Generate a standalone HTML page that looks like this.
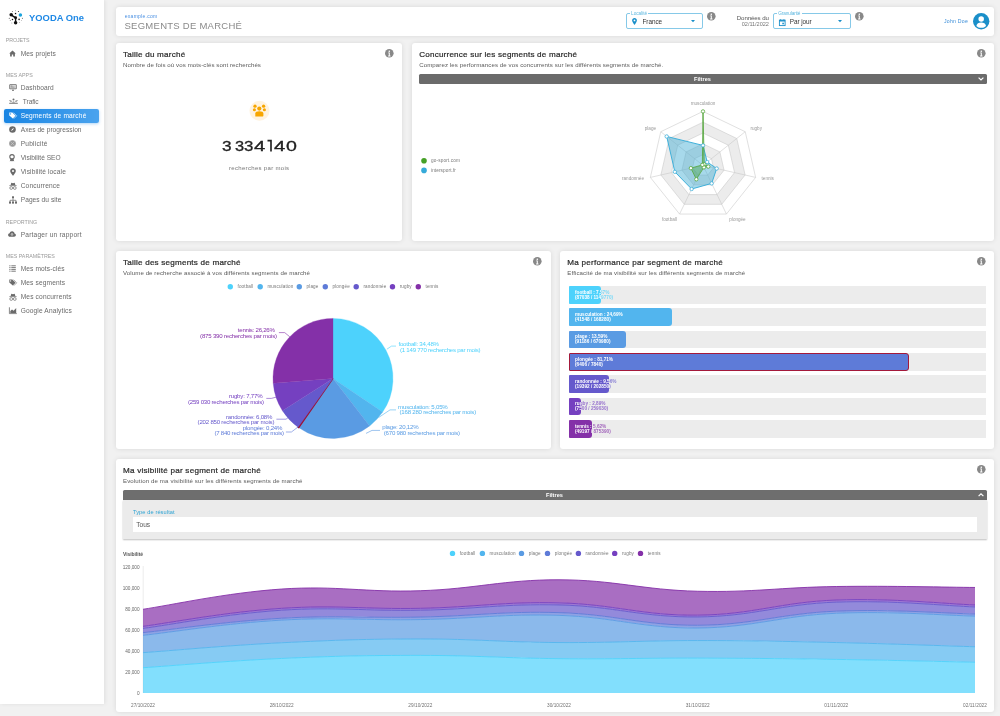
<!DOCTYPE html>
<html><head><meta charset="utf-8"><style>
*{margin:0;padding:0;box-sizing:border-box}
html,body{width:1000px;height:716px;overflow:hidden;background:#f1f1f1;font-family:"Liberation Sans", sans-serif}
.t{position:absolute;white-space:nowrap;line-height:1}
.card{position:absolute;background:#fff;box-shadow:0 0 5px rgba(0,0,0,0.10)}
.side{position:absolute;left:0;top:0;width:104px;height:703.6px;background:#fff;box-shadow:1px 0 4px rgba(0,0,0,0.08)}
svg{position:absolute;overflow:visible}
.abs{position:absolute}
</style></head><body>
<div id="wrap" style="position:absolute;left:0;top:0;width:1000px;height:716px;will-change:transform">
<div class="side"></div>
<div class="card" style="left:116px;top:7px;width:878px;height:29px;border-radius:3px"></div>
<div class="card" style="left:116px;top:43px;width:286px;height:197.5px;border-radius:3px"></div>
<div class="card" style="left:412px;top:43px;width:582px;height:197.5px;border-radius:3px"></div>
<div class="card" style="left:116px;top:250.6px;width:434.6px;height:198.4px;border-radius:3px"></div>
<div class="card" style="left:560px;top:250.6px;width:434px;height:198.4px;border-radius:3px"></div>
<div class="card" style="left:116px;top:458.5px;width:878px;height:253.0px;border-radius:3px"></div>
<svg style="left:0;top:0" width="40" height="40" viewBox="0 0 40 40"><g fill="#111">
<circle cx="11.2" cy="14.8" r="1.75"/><circle cx="15.6" cy="17.8" r="1.45"/><circle cx="15.6" cy="22.7" r="1.75"/>
<path d="M11.2 14.8 L15.6 17.8 L15.6 22.7" stroke="#111" stroke-width="1.4" fill="none"/>
<rect x="14.9" y="12.9" width="1.3" height="1.3"/><circle cx="18.4" cy="11.5" r="0.5"/><circle cx="15.5" cy="10.7" r="0.45" fill="#777"/>
<circle cx="12.4" cy="11.4" r="0.5" fill="#666"/><circle cx="9.3" cy="18.3" r="0.55" fill="#555"/><circle cx="12.5" cy="19.4" r="0.75"/>
<circle cx="10.3" cy="20.6" r="0.5" fill="#777"/><circle cx="19.1" cy="19.4" r="0.8"/><circle cx="22.4" cy="18.3" r="0.55" fill="#555"/>
<circle cx="21.4" cy="20.6" r="0.45" fill="#777"/><circle cx="19.7" cy="22.5" r="0.45" fill="#777"/><circle cx="11.8" cy="22.9" r="0.5" fill="#999"/>
</g><circle cx="20.4" cy="15" r="1.75" fill="#1aa3dc"/></svg>
<div class="abs" style="left:4.1px;top:108.6px;width:94.9px;height:14.1px;border-radius:2px;background:linear-gradient(90deg,#1985e3,#4aa3ee);box-shadow:0 1px 3px rgba(30,136,229,0.35)"></div>
<svg style="left:8.8px;top:49.7px" width="7" height="7" viewBox="0 0 7 7"><path d="M3.5 0.4 L0.2 3.4 L1.1 3.4 L1.1 6.6 L2.8 6.6 L2.8 4.6 L4.2 4.6 L4.2 6.6 L5.9 6.6 L5.9 3.4 L6.8 3.4 Z" fill="#6a6a6a"/></svg>
<svg style="left:8.5px;top:84.2px" width="8" height="7" viewBox="0 0 8 7"><rect x="0.3" y="0.3" width="7.4" height="5" rx="0.8" fill="#6a6a6a"/><rect x="1.1" y="1.0" width="5.8" height="3.5" fill="#d8d8d8"/><path d="M1.8 2h1.6M1.8 3.1h3.8" stroke="#6a6a6a" stroke-width="0.6"/><path d="M3.2 6.5h1.6" stroke="#6a6a6a" stroke-width="0.9"/><path d="M4 5.3v1" stroke="#6a6a6a" stroke-width="0.8"/></svg>
<svg style="left:9.3px;top:98.2px" width="9" height="6" viewBox="0 0 9 6"><path d="M0.2 2.6h2.2M6.6 2.6h2.2" stroke="#6a6a6a" stroke-width="0.6"/><path d="M0.2 5.3h8.6" stroke="#6a6a6a" stroke-width="0.9"/><circle cx="4.5" cy="1.4" r="1.0" fill="#6a6a6a"/><path d="M3 4.6 Q4.5 2.2 6 4.6Z" fill="#6a6a6a"/><circle cx="2.0" cy="3.6" r="0.7" fill="#6a6a6a"/><circle cx="7.0" cy="3.6" r="0.7" fill="#6a6a6a"/></svg>
<svg style="left:8.700000000000001px;top:112.19999999999999px" width="8" height="7" viewBox="0 0 8 7"><path d="M0.3 0.6 L3.3 0.6 L6.6 3.8 L3.8 6.6 L0.3 3.4 Z" fill="#fff"/><circle cx="1.6" cy="1.9" r="0.6" fill="#2d8fe6"/><path d="M4.6 0.8 L7.7 3.8 L4.8 6.7" stroke="#fff" stroke-width="0.6" fill="none"/></svg>
<svg style="left:8.8px;top:125.9px" width="7" height="7" viewBox="0 0 7 7"><circle cx="3.5" cy="3.5" r="3.3" fill="#6a6a6a"/><path d="M5 2 L3.9 3.9 L2 5 L3.1 3.1Z" fill="#fff"/></svg>
<svg style="left:8.8px;top:139.9px" width="7" height="7" viewBox="0 0 7 7"><circle cx="3.5" cy="3.5" r="3.3" fill="#9a9a9a"/><path d="M1.2 1.3 L5.7 5.7 M1.3 5.7 L5.7 1.3" stroke="#d0d0d0" stroke-width="0.6"/></svg>
<svg style="left:9.3px;top:153.6px" width="6" height="8" viewBox="0 0 6 8"><circle cx="3" cy="2.8" r="2.2" fill="none" stroke="#6a6a6a" stroke-width="1.1"/><path d="M1.5 4.6 L0.8 7.4 L2 6.8 L3 7.6 L4 6.8 L5.2 7.4 L4.5 4.6Z" fill="#6a6a6a"/></svg>
<svg style="left:9.5px;top:167.6px" width="6" height="8" viewBox="0 0 6 8"><path d="M3 0.2 C1.3 0.2 0.2 1.4 0.2 3 C0.2 4.6 3 7.8 3 7.8 C3 7.8 5.8 4.6 5.8 3 C5.8 1.4 4.7 0.2 3 0.2Z" fill="#6a6a6a"/><circle cx="3" cy="2.9" r="1" fill="#fff"/></svg>
<svg style="left:8.700000000000001px;top:181.6px" width="8" height="8" viewBox="0 0 8 8"><path d="M1.6 3.2 L2.3 0.8 L4 1.3 L5.7 0.8 L6.4 3.2Z" fill="#6a6a6a"/><path d="M0.4 3.6h7.2" stroke="#6a6a6a" stroke-width="0.7"/><circle cx="2.2" cy="6" r="1.4" fill="none" stroke="#6a6a6a" stroke-width="0.7"/><circle cx="5.8" cy="6" r="1.4" fill="none" stroke="#6a6a6a" stroke-width="0.7"/></svg>
<svg style="left:8.5px;top:195.6px" width="8" height="8" viewBox="0 0 8 8"><rect x="3" y="0.3" width="2" height="2" fill="#6a6a6a"/><path d="M4 2.3v2M1 6V4.3h6V6M4 4.3V6" stroke="#6a6a6a" stroke-width="0.7" fill="none"/><rect x="0" y="5.6" width="2" height="2" fill="#6a6a6a"/><rect x="3" y="5.6" width="2" height="2" fill="#6a6a6a"/><rect x="6" y="5.6" width="2" height="2" fill="#6a6a6a"/></svg>
<svg style="left:8.4px;top:231.1px" width="8" height="6" viewBox="0 0 8 6"><path d="M2 5.8 C0.9 5.8 0.1 5 0.1 4 C0.1 3.1 0.8 2.4 1.6 2.3 C1.9 1 2.9 0.2 4.1 0.2 C5.4 0.2 6.4 1.2 6.5 2.4 C7.3 2.6 7.9 3.3 7.9 4.1 C7.9 5.1 7.1 5.8 6.1 5.8Z" fill="#6a6a6a"/><path d="M4 4.9V2.6M3 3.5 L4 2.5 L5 3.5" stroke="#fff" stroke-width="0.7" fill="none"/></svg>
<svg style="left:9.0px;top:265.1px" width="7" height="7" viewBox="0 0 7 7"><path d="M0.3 0.8h1.2M0.3 2.6h1.2M0.3 4.4h1.2M0.3 6.2h1.2M2.3 0.8h4.5M2.3 2.6h4.5M2.3 4.4h4.5M2.3 6.2h4.5" stroke="#6a6a6a" stroke-width="0.9"/></svg>
<svg style="left:8.700000000000001px;top:279.1px" width="8" height="7" viewBox="0 0 8 7"><path d="M0.3 0.6 L3.3 0.6 L6.6 3.8 L3.8 6.6 L0.3 3.4 Z" fill="#6a6a6a"/><circle cx="1.6" cy="1.9" r="0.6" fill="#fff"/><path d="M4.6 0.8 L7.7 3.8 L4.8 6.7" stroke="#6a6a6a" stroke-width="0.6" fill="none"/></svg>
<svg style="left:8.700000000000001px;top:292.5px" width="8" height="8" viewBox="0 0 8 8"><path d="M1.6 3.2 L2.3 0.8 L4 1.3 L5.7 0.8 L6.4 3.2Z" fill="#6a6a6a"/><path d="M0.4 3.6h7.2" stroke="#6a6a6a" stroke-width="0.7"/><circle cx="2.2" cy="6" r="1.4" fill="none" stroke="#6a6a6a" stroke-width="0.7"/><circle cx="5.8" cy="6" r="1.4" fill="none" stroke="#6a6a6a" stroke-width="0.7"/></svg>
<svg style="left:8.700000000000001px;top:306.8px" width="8" height="7" viewBox="0 0 8 7"><path d="M0.4 0.3V6.6H7.8" stroke="#6a6a6a" stroke-width="0.8" fill="none"/><path d="M1.3 6 L1.3 4 L3 2.4 L4.6 3.8 L7.2 1 L7.2 6Z" fill="#6a6a6a"/></svg>
<div class="abs" style="left:626.1px;top:13.1px;width:77.3px;height:16.4px;border:1px solid #86c9e8;border-radius:2px"></div>
<div class="abs" style="left:630.1px;top:11.5px;width:18.4px;height:4px;background:#fff"></div>
<svg style="left:691.0px;top:20.3px" width="4" height="2.5" viewBox="0 0 4 2.5"><path d="M0 0 L4 0 L2 2.2Z" fill="#1a8fc9"/></svg>
<svg style="left:631.7px;top:18.0px" width="5" height="7" viewBox="0 0 5 7"><path d="M2.5 0.1 C1.1 0.1 0.1 1.1 0.1 2.4 C0.1 3.8 2.5 6.9 2.5 6.9 C2.5 6.9 4.9 3.8 4.9 2.4 C4.9 1.1 3.9 0.1 2.5 0.1Z" fill="#1a8fc9"/><circle cx="2.5" cy="2.4" r="0.9" fill="#fff"/></svg>
<div class="abs" style="left:773.3000000000001px;top:13.1px;width:77.3px;height:16.4px;border:1px solid #86c9e8;border-radius:2px"></div>
<div class="abs" style="left:777.3000000000001px;top:11.5px;width:24.4px;height:4px;background:#fff"></div>
<svg style="left:838.2px;top:20.3px" width="4" height="2.5" viewBox="0 0 4 2.5"><path d="M0 0 L4 0 L2 2.2Z" fill="#1a8fc9"/></svg>
<svg style="left:778.5px;top:18.7px" width="6.5" height="7" viewBox="0 0 6.5 7"><rect x="0.4" y="1.1" width="5.7" height="5.5" fill="none" stroke="#1a8fc9" stroke-width="0.9"/><rect x="0.4" y="1.1" width="5.7" height="1.4" fill="#1a8fc9"/><path d="M1.6 0.2v1.2M4.9 0.2v1.2" stroke="#1a8fc9" stroke-width="0.8"/><rect x="3.3" y="3.7" width="1.6" height="1.6" fill="#1a8fc9"/></svg>
<svg style="left:706.7px;top:11.899999999999999px" width="8.6" height="8.6" viewBox="0 0 10 10"><circle cx="5" cy="5" r="5" fill="#888"/><circle cx="5" cy="2.6" r="0.95" fill="#fff"/><path d="M3.7 4.1h1.9v3.6h0.8v0.9H3.6v-0.9h0.8V5H3.7Z" fill="#fff"/></svg>
<svg style="left:854.7px;top:11.899999999999999px" width="8.6" height="8.6" viewBox="0 0 10 10"><circle cx="5" cy="5" r="5" fill="#888"/><circle cx="5" cy="2.6" r="0.95" fill="#fff"/><path d="M3.7 4.1h1.9v3.6h0.8v0.9H3.6v-0.9h0.8V5H3.7Z" fill="#fff"/></svg>
<svg style="left:972.6px;top:13px" width="16.4" height="16.4" viewBox="0 0 16 16"><circle cx="8" cy="8" r="8" fill="#1a8fc9"/><circle cx="8" cy="5.8" r="2.7" fill="#fff"/><path d="M3.3 12.6 C3.6 10.2 5.5 9.2 8 9.2 C10.5 9.2 12.4 10.2 12.7 12.6 C11.5 13.8 9.9 14.4 8 14.4 C6.1 14.4 4.5 13.8 3.3 12.6Z" fill="#fff"/></svg>
<svg style="left:385.2px;top:48.900000000000006px" width="8.6" height="8.6" viewBox="0 0 10 10"><circle cx="5" cy="5" r="5" fill="#888"/><circle cx="5" cy="2.6" r="0.95" fill="#fff"/><path d="M3.7 4.1h1.9v3.6h0.8v0.9H3.6v-0.9h0.8V5H3.7Z" fill="#fff"/></svg>
<svg style="left:977.3000000000001px;top:48.900000000000006px" width="8.6" height="8.6" viewBox="0 0 10 10"><circle cx="5" cy="5" r="5" fill="#888"/><circle cx="5" cy="2.6" r="0.95" fill="#fff"/><path d="M3.7 4.1h1.9v3.6h0.8v0.9H3.6v-0.9h0.8V5H3.7Z" fill="#fff"/></svg>
<svg style="left:533.2px;top:256.9px" width="8.6" height="8.6" viewBox="0 0 10 10"><circle cx="5" cy="5" r="5" fill="#888"/><circle cx="5" cy="2.6" r="0.95" fill="#fff"/><path d="M3.7 4.1h1.9v3.6h0.8v0.9H3.6v-0.9h0.8V5H3.7Z" fill="#fff"/></svg>
<svg style="left:977.3000000000001px;top:256.9px" width="8.6" height="8.6" viewBox="0 0 10 10"><circle cx="5" cy="5" r="5" fill="#888"/><circle cx="5" cy="2.6" r="0.95" fill="#fff"/><path d="M3.7 4.1h1.9v3.6h0.8v0.9H3.6v-0.9h0.8V5H3.7Z" fill="#fff"/></svg>
<svg style="left:977.3000000000001px;top:464.7px" width="8.6" height="8.6" viewBox="0 0 10 10"><circle cx="5" cy="5" r="5" fill="#888"/><circle cx="5" cy="2.6" r="0.95" fill="#fff"/><path d="M3.7 4.1h1.9v3.6h0.8v0.9H3.6v-0.9h0.8V5H3.7Z" fill="#fff"/></svg>
<svg style="left:0;top:0" width="1000" height="716"><circle cx="259.5" cy="110.7" r="10" fill="#fff3df"/>
<g fill="#f7a600">
<circle cx="255.0" cy="106.2" r="1.65"/><circle cx="263.6" cy="106.2" r="1.65"/>
<circle cx="254.4" cy="109.8" r="1.55"/><circle cx="264.4" cy="109.8" r="1.55"/>
<circle cx="259.3" cy="108.6" r="2.1"/>
<path d="M255.3 116.6 L255.3 113.6 C255.3 111.9 256.8 111.2 259.3 111.2 C261.8 111.2 263.4 111.9 263.4 113.6 L263.4 115.6 C263.4 116.3 263 116.6 262.4 116.6 Z"/>
</g></svg>
<svg style="left:0;top:0" width="1000" height="716"><path d="M267.5 140.6 H271.0 V151.4" stroke="#222" stroke-width="1.65" fill="none" stroke-linejoin="miter"/></svg>
<div class="t" style="left:222.20px;top:139.20px;font-size:14.5px;color:#222;-webkit-text-stroke:0.3px #222;transform:scaleX(1.186);transform-origin:0 0">3</div>
<div class="t" style="left:234.60px;top:139.20px;font-size:14.5px;color:#222;-webkit-text-stroke:0.3px #222;transform:scaleX(1.131);transform-origin:0 0">3</div>
<div class="t" style="left:244.40px;top:139.20px;font-size:14.5px;color:#222;-webkit-text-stroke:0.3px #222;transform:scaleX(1.159);transform-origin:0 0">3</div>
<div class="t" style="left:254.40px;top:139.20px;font-size:14.5px;color:#222;-webkit-text-stroke:0.3px #222;transform:scaleX(1.407);transform-origin:0 0">4</div>
<div class="t" style="left:274.40px;top:139.20px;font-size:14.5px;color:#222;-webkit-text-stroke:0.3px #222;transform:scaleX(1.407);transform-origin:0 0">4</div>
<div class="t" style="left:286.00px;top:139.20px;font-size:14.5px;color:#222;-webkit-text-stroke:0.3px #222;transform:scaleX(1.352);transform-origin:0 0">0</div>
<div class="abs" style="left:419.2px;top:74px;width:568.3px;height:9.6px;background:#6b6b6b;border-radius:1.5px"></div>
<svg style="left:977.5px;top:77.3px" width="6" height="4" viewBox="0 0 6 4"><path d="M0.6 0.6 L3 3 L5.4 0.6" stroke="#fff" stroke-width="1.2" fill="none"/></svg>
<svg style="left:0;top:0" width="1000" height="716"><polygon points="703.00,111.40 745.22,131.73 755.65,177.42 726.43,214.05 679.57,214.05 650.35,177.42 660.78,131.73" fill="#ffffff" stroke="#c6c6c6" stroke-width="0.55"/><polygon points="703.00,122.20 736.78,138.47 745.12,175.01 721.74,204.32 684.26,204.32 660.88,175.01 669.22,138.47" fill="#ececec" stroke="#c6c6c6" stroke-width="0.55"/><polygon points="703.00,133.00 728.33,145.20 734.59,172.61 717.06,194.59 688.94,194.59 671.41,172.61 677.67,145.20" fill="#ffffff" stroke="#c6c6c6" stroke-width="0.55"/><polygon points="703.00,143.80 719.89,151.93 724.06,170.21 712.37,184.86 693.63,184.86 681.94,170.21 686.11,151.93" fill="#ececec" stroke="#c6c6c6" stroke-width="0.55"/><polygon points="703.00,154.60 711.44,158.67 713.53,167.80 707.69,175.13 698.31,175.13 692.47,167.80 694.56,158.67" fill="#ffffff" stroke="#c6c6c6" stroke-width="0.55"/><line x1="703.0" y1="165.4" x2="703.00" y2="111.40" stroke="#c6c6c6" stroke-width="0.55"/><line x1="703.0" y1="165.4" x2="745.22" y2="131.73" stroke="#c6c6c6" stroke-width="0.55"/><line x1="703.0" y1="165.4" x2="755.65" y2="177.42" stroke="#c6c6c6" stroke-width="0.55"/><line x1="703.0" y1="165.4" x2="726.43" y2="214.05" stroke="#c6c6c6" stroke-width="0.55"/><line x1="703.0" y1="165.4" x2="679.57" y2="214.05" stroke="#c6c6c6" stroke-width="0.55"/><line x1="703.0" y1="165.4" x2="650.35" y2="177.42" stroke="#c6c6c6" stroke-width="0.55"/><line x1="703.0" y1="165.4" x2="660.78" y2="131.73" stroke="#c6c6c6" stroke-width="0.55"/><polygon points="703.00,145.42 707.22,162.03 716.69,168.52 711.67,183.40 691.64,189.00 674.83,171.83 666.69,136.45" fill="rgba(60,170,210,0.45)" stroke="#3fb0da" stroke-width="1"/><polygon points="703.00,111.40 704.27,164.39 708.26,166.60 703.94,167.35 696.32,179.27 690.89,168.16 702.37,164.89" fill="rgba(70,160,70,0.45)" stroke="#56a83c" stroke-width="0.8"/><circle cx="703.00" cy="145.42" r="1.7" fill="#fff" stroke="#3fb0da" stroke-width="0.8"/><circle cx="707.22" cy="162.03" r="1.7" fill="#fff" stroke="#3fb0da" stroke-width="0.8"/><circle cx="716.69" cy="168.52" r="1.7" fill="#fff" stroke="#3fb0da" stroke-width="0.8"/><circle cx="711.67" cy="183.40" r="1.7" fill="#fff" stroke="#3fb0da" stroke-width="0.8"/><circle cx="691.64" cy="189.00" r="1.7" fill="#fff" stroke="#3fb0da" stroke-width="0.8"/><circle cx="674.83" cy="171.83" r="1.7" fill="#fff" stroke="#3fb0da" stroke-width="0.8"/><circle cx="666.69" cy="136.45" r="1.7" fill="#fff" stroke="#3fb0da" stroke-width="0.8"/><circle cx="703.00" cy="111.40" r="1.7" fill="#fff" stroke="#56a83c" stroke-width="0.8"/><circle cx="704.27" cy="164.39" r="1.7" fill="#fff" stroke="#56a83c" stroke-width="0.8"/><circle cx="708.26" cy="166.60" r="1.7" fill="#fff" stroke="#56a83c" stroke-width="0.8"/><circle cx="703.94" cy="167.35" r="1.7" fill="#fff" stroke="#56a83c" stroke-width="0.8"/><circle cx="696.32" cy="179.27" r="1.7" fill="#fff" stroke="#56a83c" stroke-width="0.8"/><circle cx="690.89" cy="168.16" r="1.7" fill="#fff" stroke="#56a83c" stroke-width="0.8"/><circle cx="702.37" cy="164.89" r="1.7" fill="#fff" stroke="#56a83c" stroke-width="0.8"/></svg>
<svg style="left:0;top:0" width="1000" height="716"><circle cx="424" cy="160.8" r="2.8" fill="#45a026"/><circle cx="424" cy="170.4" r="2.8" fill="#35aad9"/></svg>
<svg style="left:0;top:0" width="1000" height="716"><circle cx="230.30" cy="286.7" r="2.7" fill="#4dd2fc"/><circle cx="260.20" cy="286.7" r="2.7" fill="#52b5ee"/><circle cx="299.30" cy="286.7" r="2.7" fill="#5a9be3"/><circle cx="325.30" cy="286.7" r="2.7" fill="#5e7bd8"/><circle cx="356.20" cy="286.7" r="2.7" fill="#6559cc"/><circle cx="392.50" cy="286.7" r="2.7" fill="#7540c0"/><circle cx="418.30" cy="286.7" r="2.7" fill="#8430a8"/></svg>
<svg style="left:0;top:0" width="1000" height="716"><path d="M333.0,378.4 L333.00,318.40 A60.0,60.0 0 0 1 382.67,412.06 Z" fill="#4dd2fc" stroke="#4dd2fc" stroke-width="0.3"/><path d="M333.0,378.4 L382.67,412.06 A60.0,60.0 0 0 1 369.68,425.88 Z" fill="#52b5ee" stroke="#52b5ee" stroke-width="0.3"/><path d="M333.0,378.4 L369.68,425.88 A60.0,60.0 0 0 1 298.81,427.70 Z" fill="#5a9be3" stroke="#5a9be3" stroke-width="0.3"/><path d="M333.0,378.4 L298.81,427.70 A60.0,60.0 0 0 1 298.07,427.18 Z" fill="#5e7bd8" stroke="#9e1030" stroke-width="1.3"/><path d="M333.0,378.4 L298.07,427.18 A60.0,60.0 0 0 1 282.40,410.65 Z" fill="#6559cc" stroke="#6559cc" stroke-width="0.3"/><path d="M333.0,378.4 L282.40,410.65 A60.0,60.0 0 0 1 273.19,383.15 Z" fill="#7540c0" stroke="#7540c0" stroke-width="0.3"/><path d="M333.0,378.4 L273.19,383.15 A60.0,60.0 0 0 1 333.00,318.40 Z" fill="#8430a8" stroke="#8430a8" stroke-width="0.3"/></svg>
<svg style="left:0;top:0" width="1000" height="716"><g fill="none" stroke-width="0.6">
<path d="M278.9 332.6 H284.7 L289.8 336.8" stroke="#8430a8"/>
<path d="M266.3 398.4 H271.3 L276.4 397.1" stroke="#7540c0"/>
<path d="M276.4 419.2 H286 L289 417" stroke="#6559cc"/>
<path d="M285.9 432 H291.4 L298 427" stroke="#5e7bd8"/>
<path d="M386.9 349.2 L391.5 346.1 H396" stroke="#4dd2fc"/>
<path d="M378.5 417.6 L390 409.9 H396" stroke="#52b5ee"/>
<path d="M366 433.4 L372 430.4 H380" stroke="#5a9be3"/>
</g></svg>
<div class="abs" style="left:569.0px;top:286.00px;width:416.5px;height:17.6px;background:#ececec"></div>
<div style="position:absolute;left:0;top:0;opacity:0.72"><div class="t" style="left:575.00px;top:290.52px;font-size:4.7px;font-weight:700;color:#4dd2fc">football : 7,57%</div><div class="t" style="left:575.00px;top:295.62px;font-size:4.7px;font-weight:700;color:#4dd2fc">(87038 / 1149770)</div></div>
<div class="abs" style="left:569.0px;top:286.00px;width:31.53px;height:17.6px;background:#4dd2fc;border-radius:1px 3px 3px 1px;overflow:hidden;"><div class="t" style="left:6.00px;top:4.52px;font-size:4.7px;font-weight:700;color:#fff">football : 7,57%</div><div class="t" style="left:6.00px;top:9.62px;font-size:4.7px;font-weight:700;color:#fff">(87038 / 1149770)</div></div>
<div class="abs" style="left:569.0px;top:308.36px;width:416.5px;height:17.6px;background:#ececec"></div>
<div style="position:absolute;left:0;top:0;opacity:0.72"><div class="t" style="left:575.00px;top:312.88px;font-size:4.7px;font-weight:700;color:#52b5ee">musculation : 24,69%</div><div class="t" style="left:575.00px;top:317.98px;font-size:4.7px;font-weight:700;color:#52b5ee">(41548 / 168280)</div></div>
<div class="abs" style="left:569.0px;top:308.36px;width:102.83px;height:17.6px;background:#52b5ee;border-radius:1px 3px 3px 1px;overflow:hidden;"><div class="t" style="left:6.00px;top:4.52px;font-size:4.7px;font-weight:700;color:#fff">musculation : 24,69%</div><div class="t" style="left:6.00px;top:9.62px;font-size:4.7px;font-weight:700;color:#fff">(41548 / 168280)</div></div>
<div class="abs" style="left:569.0px;top:330.72px;width:416.5px;height:17.6px;background:#ececec"></div>
<div style="position:absolute;left:0;top:0;opacity:0.72"><div class="t" style="left:575.00px;top:335.24px;font-size:4.7px;font-weight:700;color:#5a9be3">plage : 13,59%</div><div class="t" style="left:575.00px;top:340.34px;font-size:4.7px;font-weight:700;color:#5a9be3">(91186 / 670980)</div></div>
<div class="abs" style="left:569.0px;top:330.72px;width:56.60px;height:17.6px;background:#5a9be3;border-radius:1px 3px 3px 1px;overflow:hidden;"><div class="t" style="left:6.00px;top:4.52px;font-size:4.7px;font-weight:700;color:#fff">plage : 13,59%</div><div class="t" style="left:6.00px;top:9.62px;font-size:4.7px;font-weight:700;color:#fff">(91186 / 670980)</div></div>
<div class="abs" style="left:569.0px;top:353.08px;width:416.5px;height:17.6px;background:#ececec"></div>
<div style="position:absolute;left:0;top:0;opacity:0.72"><div class="t" style="left:575.00px;top:357.60px;font-size:4.7px;font-weight:700;color:#5e7bd8">plongée : 81,71%</div><div class="t" style="left:575.00px;top:362.70px;font-size:4.7px;font-weight:700;color:#5e7bd8">(6406 / 7840)</div></div>
<div class="abs" style="left:569.0px;top:353.08px;width:340.32px;height:17.6px;background:#5e7bd8;border-radius:1px 3px 3px 1px;overflow:hidden;border:1px solid #a4193a;"><div class="t" style="left:5.00px;top:3.52px;font-size:4.7px;font-weight:700;color:#fff">plongée : 81,71%</div><div class="t" style="left:5.00px;top:8.62px;font-size:4.7px;font-weight:700;color:#fff">(6406 / 7840)</div></div>
<div class="abs" style="left:569.0px;top:375.44px;width:416.5px;height:17.6px;background:#ececec"></div>
<div style="position:absolute;left:0;top:0;opacity:0.72"><div class="t" style="left:575.00px;top:379.96px;font-size:4.7px;font-weight:700;color:#6559cc">randonnée : 9,56%</div><div class="t" style="left:575.00px;top:385.06px;font-size:4.7px;font-weight:700;color:#6559cc">(19392 / 202850)</div></div>
<div class="abs" style="left:569.0px;top:375.44px;width:39.82px;height:17.6px;background:#6559cc;border-radius:1px 3px 3px 1px;overflow:hidden;"><div class="t" style="left:6.00px;top:4.52px;font-size:4.7px;font-weight:700;color:#fff">randonnée : 9,56%</div><div class="t" style="left:6.00px;top:9.62px;font-size:4.7px;font-weight:700;color:#fff">(19392 / 202850)</div></div>
<div class="abs" style="left:569.0px;top:397.80px;width:416.5px;height:17.6px;background:#ececec"></div>
<div style="position:absolute;left:0;top:0;opacity:0.72"><div class="t" style="left:575.00px;top:402.32px;font-size:4.7px;font-weight:700;color:#7540c0">rugby : 2,89%</div><div class="t" style="left:575.00px;top:407.42px;font-size:4.7px;font-weight:700;color:#7540c0">(7500 / 259030)</div></div>
<div class="abs" style="left:569.0px;top:397.80px;width:12.04px;height:17.6px;background:#7540c0;border-radius:1px 3px 3px 1px;overflow:hidden;"><div class="t" style="left:6.00px;top:4.52px;font-size:4.7px;font-weight:700;color:#fff">rugby : 2,89%</div><div class="t" style="left:6.00px;top:9.62px;font-size:4.7px;font-weight:700;color:#fff">(7500 / 259030)</div></div>
<div class="abs" style="left:569.0px;top:420.16px;width:416.5px;height:17.6px;background:#ececec"></div>
<div style="position:absolute;left:0;top:0;opacity:0.72"><div class="t" style="left:575.00px;top:424.68px;font-size:4.7px;font-weight:700;color:#8430a8">tennis : 5,62%</div><div class="t" style="left:575.00px;top:429.78px;font-size:4.7px;font-weight:700;color:#8430a8">(49197 / 875390)</div></div>
<div class="abs" style="left:569.0px;top:420.16px;width:23.41px;height:17.6px;background:#8430a8;border-radius:1px 3px 3px 1px;overflow:hidden;"><div class="t" style="left:6.00px;top:4.52px;font-size:4.7px;font-weight:700;color:#fff">tennis : 5,62%</div><div class="t" style="left:6.00px;top:9.62px;font-size:4.7px;font-weight:700;color:#fff">(49197 / 875390)</div></div>
<div class="abs" style="left:122.8px;top:490px;width:864.7px;height:10px;background:#6e6e6e;border-radius:1.5px 1.5px 0 0"></div>
<div class="abs" style="left:122.8px;top:500px;width:864.7px;height:39px;background:#ebebeb;box-shadow:0 1px 1.5px rgba(0,0,0,0.25)"></div>
<svg style="left:977.5px;top:493.3px" width="6" height="4" viewBox="0 0 6 4"><path d="M0.6 3.2 L3 0.8 L5.4 3.2" stroke="#fff" stroke-width="1.2" fill="none"/></svg>
<div class="abs" style="left:132.9px;top:516.9px;width:844.6px;height:15.1px;background:#fff"></div>
<svg style="left:0;top:0" width="1000" height="716"><circle cx="452.50" cy="553.4" r="2.7" fill="#4dd2fc"/><circle cx="482.40" cy="553.4" r="2.7" fill="#52b5ee"/><circle cx="521.50" cy="553.4" r="2.7" fill="#5a9be3"/><circle cx="547.50" cy="553.4" r="2.7" fill="#5e7bd8"/><circle cx="578.40" cy="553.4" r="2.7" fill="#6559cc"/><circle cx="614.70" cy="553.4" r="2.7" fill="#7540c0"/><circle cx="640.50" cy="553.4" r="2.7" fill="#8430a8"/></svg>
<svg style="left:0;top:0" width="1000" height="716"><line x1="143.2" y1="566" x2="143.2" y2="693" stroke="#e0e0e0" stroke-width="0.6"/><path d="M143.00,667.73 C170.73,665.87 226.20,660.92 281.67,658.46 C337.13,655.99 364.87,655.36 420.33,655.40 C475.80,655.44 503.53,658.12 559.00,658.67 C614.47,659.21 642.20,657.99 697.67,658.14 C753.13,658.29 780.87,658.58 836.33,659.40 C891.80,660.23 947.27,661.68 975.00,662.25 L975.00,692.90 C947.27,692.90 891.80,692.90 836.33,692.90 C780.87,692.90 753.13,692.90 697.67,692.90 C642.20,692.90 614.47,692.90 559.00,692.90 C503.53,692.90 475.80,692.90 420.33,692.90 C364.87,692.90 337.13,692.90 281.67,692.90 C226.20,692.90 170.73,692.90 143.00,692.90 Z" fill="#4dd2fc" fill-opacity="0.7"/><path d="M143.00,652.66 C170.73,650.68 226.20,645.50 281.67,642.76 C337.13,640.02 364.87,639.01 420.33,638.97 C475.80,638.93 503.53,642.23 559.00,642.55 C614.47,642.87 642.20,640.55 697.67,640.55 C753.13,640.55 780.87,641.31 836.33,642.55 C891.80,643.79 947.27,645.92 975.00,646.76 L975.00,662.25 C947.27,661.68 891.80,660.23 836.33,659.40 C780.87,658.58 753.13,658.29 697.67,658.14 C642.20,657.99 614.47,659.21 559.00,658.67 C503.53,658.12 475.80,655.44 420.33,655.40 C364.87,655.36 337.13,655.99 281.67,658.46 C226.20,660.92 170.73,665.87 143.00,667.73 Z" fill="#52b5ee" fill-opacity="0.7"/><path d="M143.00,635.39 C170.73,632.33 226.20,623.27 281.67,620.11 C337.13,616.95 364.87,620.54 420.33,619.59 C475.80,618.64 503.53,613.69 559.00,615.37 C614.47,617.06 642.20,628.44 697.67,628.01 C753.13,627.59 780.87,615.65 836.33,613.27 C891.80,610.89 947.27,615.54 975.00,616.11 L975.00,646.76 C947.27,645.92 891.80,643.79 836.33,642.55 C780.87,641.31 753.13,640.55 697.67,640.55 C642.20,640.55 614.47,642.87 559.00,642.55 C503.53,642.23 475.80,638.93 420.33,638.97 C364.87,639.01 337.13,640.02 281.67,642.76 C226.20,645.50 170.73,650.68 143.00,652.66 Z" fill="#5a9be3" fill-opacity="0.7"/><path d="M143.00,632.65 C170.73,629.76 226.20,621.34 281.67,618.22 C337.13,615.10 364.87,618.18 420.33,617.06 C475.80,615.94 503.53,610.99 559.00,612.64 C614.47,614.28 642.20,625.57 697.67,625.28 C753.13,624.98 780.87,613.42 836.33,611.16 C891.80,608.91 947.27,613.44 975.00,614.01 L975.00,616.11 C947.27,615.54 891.80,610.89 836.33,613.27 C780.87,615.65 753.13,627.59 697.67,628.01 C642.20,628.44 614.47,617.06 559.00,615.37 C503.53,613.69 475.80,618.64 420.33,619.59 C364.87,620.54 337.13,616.95 281.67,620.11 C226.20,623.27 170.73,632.33 143.00,635.39 Z" fill="#5e7bd8" fill-opacity="0.7"/><path d="M143.00,628.44 C170.73,624.79 226.20,613.86 281.67,610.21 C337.13,606.57 364.87,611.27 420.33,610.21 C475.80,609.16 503.53,603.60 559.00,604.95 C614.47,606.29 642.20,617.52 697.67,616.95 C753.13,616.39 780.87,604.10 836.33,602.10 C891.80,600.10 947.27,605.98 975.00,606.95 L975.00,614.01 C947.27,613.44 891.80,608.91 836.33,611.16 C780.87,613.42 753.13,624.98 697.67,625.28 C642.20,625.57 614.47,614.28 559.00,612.64 C503.53,610.99 475.80,615.94 420.33,617.06 C364.87,618.18 337.13,615.10 281.67,618.22 C226.20,621.34 170.73,629.76 143.00,632.65 Z" fill="#6559cc" fill-opacity="0.7"/><path d="M143.00,626.33 C170.73,622.73 226.20,611.92 281.67,608.32 C337.13,604.71 364.87,609.41 420.33,608.32 C475.80,607.22 503.53,601.47 559.00,602.84 C614.47,604.21 642.20,615.73 697.67,615.16 C753.13,614.60 780.87,602.04 836.33,600.00 C891.80,597.95 947.27,603.96 975.00,604.95 L975.00,606.95 C947.27,605.98 891.80,600.10 836.33,602.10 C780.87,604.10 753.13,616.39 697.67,616.95 C642.20,617.52 614.47,606.29 559.00,604.95 C503.53,603.60 475.80,609.16 420.33,610.21 C364.87,611.27 337.13,606.57 281.67,610.21 C226.20,613.86 170.73,624.79 143.00,628.44 Z" fill="#7540c0" fill-opacity="0.7"/><path d="M143.00,609.27 C170.73,605.22 226.20,592.75 281.67,589.04 C337.13,585.33 364.87,592.58 420.33,590.73 C475.80,588.87 503.53,579.67 559.00,579.77 C614.47,579.88 642.20,589.91 697.67,591.25 C753.13,592.60 780.87,587.27 836.33,586.51 C891.80,585.75 947.27,587.27 975.00,587.46 L975.00,604.95 C947.27,603.96 891.80,597.95 836.33,600.00 C780.87,602.04 753.13,614.60 697.67,615.16 C642.20,615.73 614.47,604.21 559.00,602.84 C503.53,601.47 475.80,607.22 420.33,608.32 C364.87,609.41 337.13,604.71 281.67,608.32 C226.20,611.92 170.73,622.73 143.00,626.33 Z" fill="#8430a8" fill-opacity="0.7"/><path d="M143.00,667.73 C170.73,665.87 226.20,660.92 281.67,658.46 C337.13,655.99 364.87,655.36 420.33,655.40 C475.80,655.44 503.53,658.12 559.00,658.67 C614.47,659.21 642.20,657.99 697.67,658.14 C753.13,658.29 780.87,658.58 836.33,659.40 C891.80,660.23 947.27,661.68 975.00,662.25" fill="none" stroke="#4dd2fc" stroke-width="0.9"/><path d="M143.00,652.66 C170.73,650.68 226.20,645.50 281.67,642.76 C337.13,640.02 364.87,639.01 420.33,638.97 C475.80,638.93 503.53,642.23 559.00,642.55 C614.47,642.87 642.20,640.55 697.67,640.55 C753.13,640.55 780.87,641.31 836.33,642.55 C891.80,643.79 947.27,645.92 975.00,646.76" fill="none" stroke="#52b5ee" stroke-width="0.9"/><path d="M143.00,635.39 C170.73,632.33 226.20,623.27 281.67,620.11 C337.13,616.95 364.87,620.54 420.33,619.59 C475.80,618.64 503.53,613.69 559.00,615.37 C614.47,617.06 642.20,628.44 697.67,628.01 C753.13,627.59 780.87,615.65 836.33,613.27 C891.80,610.89 947.27,615.54 975.00,616.11" fill="none" stroke="#5a9be3" stroke-width="0.9"/><path d="M143.00,632.65 C170.73,629.76 226.20,621.34 281.67,618.22 C337.13,615.10 364.87,618.18 420.33,617.06 C475.80,615.94 503.53,610.99 559.00,612.64 C614.47,614.28 642.20,625.57 697.67,625.28 C753.13,624.98 780.87,613.42 836.33,611.16 C891.80,608.91 947.27,613.44 975.00,614.01" fill="none" stroke="#5e7bd8" stroke-width="0.9"/><path d="M143.00,628.44 C170.73,624.79 226.20,613.86 281.67,610.21 C337.13,606.57 364.87,611.27 420.33,610.21 C475.80,609.16 503.53,603.60 559.00,604.95 C614.47,606.29 642.20,617.52 697.67,616.95 C753.13,616.39 780.87,604.10 836.33,602.10 C891.80,600.10 947.27,605.98 975.00,606.95" fill="none" stroke="#6559cc" stroke-width="0.9"/><path d="M143.00,626.33 C170.73,622.73 226.20,611.92 281.67,608.32 C337.13,604.71 364.87,609.41 420.33,608.32 C475.80,607.22 503.53,601.47 559.00,602.84 C614.47,604.21 642.20,615.73 697.67,615.16 C753.13,614.60 780.87,602.04 836.33,600.00 C891.80,597.95 947.27,603.96 975.00,604.95" fill="none" stroke="#7540c0" stroke-width="0.9"/><path d="M143.00,609.27 C170.73,605.22 226.20,592.75 281.67,589.04 C337.13,585.33 364.87,592.58 420.33,590.73 C475.80,588.87 503.53,579.67 559.00,579.77 C614.47,579.88 642.20,589.91 697.67,591.25 C753.13,592.60 780.87,587.27 836.33,586.51 C891.80,585.75 947.27,587.27 975.00,587.46" fill="none" stroke="#8430a8" stroke-width="0.9"/></svg>
<div class="t" style="left:29.00px;top:13.34px;font-size:9.4px;color:#1e88e5;font-weight:700;letter-spacing:0.014px;">YOODA One</div>
<div class="t" style="left:5.80px;top:38.36px;font-size:5.3px;color:#9a9a9a;letter-spacing:-0.120px;">PROJETS</div>
<div class="t" style="left:5.80px;top:72.76px;font-size:5.3px;color:#9a9a9a;letter-spacing:0.013px;">MES APPS</div>
<div class="t" style="left:5.80px;top:219.66px;font-size:5.3px;color:#9a9a9a;letter-spacing:-0.001px;">REPORTING</div>
<div class="t" style="left:5.80px;top:254.06px;font-size:5.3px;color:#9a9a9a;letter-spacing:-0.004px;">MES PARAMÈTRES</div>
<div class="t" style="left:20.70px;top:51.11px;font-size:6.6px;color:#6a6a6a;letter-spacing:0.101px;">Mes projets</div>
<div class="t" style="left:20.70px;top:85.41px;font-size:6.6px;color:#6a6a6a;letter-spacing:0.104px;">Dashboard</div>
<div class="t" style="left:22.80px;top:99.41px;font-size:6.6px;color:#6a6a6a;letter-spacing:-0.075px;">Trafic</div>
<div class="t" style="left:20.70px;top:113.31px;font-size:6.6px;color:#fff;letter-spacing:0.173px;">Segments de marché</div>
<div class="t" style="left:20.70px;top:127.31px;font-size:6.6px;color:#6a6a6a;letter-spacing:0.041px;">Axes de progression</div>
<div class="t" style="left:20.70px;top:141.31px;font-size:6.6px;color:#6a6a6a;letter-spacing:0.218px;">Publicité</div>
<div class="t" style="left:20.70px;top:155.31px;font-size:6.6px;color:#6a6a6a;letter-spacing:0.005px;">Visibilité SEO</div>
<div class="t" style="left:20.70px;top:169.31px;font-size:6.6px;color:#6a6a6a;letter-spacing:0.127px;">Visibilité locale</div>
<div class="t" style="left:20.70px;top:183.31px;font-size:6.6px;color:#6a6a6a;letter-spacing:0.141px;">Concurrence</div>
<div class="t" style="left:20.70px;top:197.31px;font-size:6.6px;color:#6a6a6a;letter-spacing:0.064px;">Pages du site</div>
<div class="t" style="left:20.70px;top:232.01px;font-size:6.6px;color:#6a6a6a;letter-spacing:0.206px;">Partager un rapport</div>
<div class="t" style="left:20.70px;top:266.31px;font-size:6.6px;color:#6a6a6a;letter-spacing:0.115px;">Mes mots-clés</div>
<div class="t" style="left:20.70px;top:280.21px;font-size:6.6px;color:#6a6a6a;letter-spacing:0.134px;">Mes segments</div>
<div class="t" style="left:20.70px;top:294.21px;font-size:6.6px;color:#6a6a6a;letter-spacing:0.157px;">Mes concurrents</div>
<div class="t" style="left:20.70px;top:308.21px;font-size:6.6px;color:#6a6a6a;letter-spacing:0.136px;">Google Analytics</div>
<div class="t" style="left:124.80px;top:13.87px;font-size:5.0px;color:#4a90e2;letter-spacing:0.261px;">example.com</div>
<div class="t" style="left:124.50px;top:21.06px;font-size:9.5px;color:#8a8a8a;letter-spacing:0.263px;">SEGMENTS DE MARCHÉ</div>
<div class="t" style="left:631.10px;top:12.22px;font-size:4.7px;color:#5fb8e0;letter-spacing:-0.021px;">Localité</div>
<div class="t" style="left:642.50px;top:19.38px;font-size:6.4px;color:#333;letter-spacing:-0.065px;">France</div>
<div class="t" style="left:778.30px;top:12.22px;font-size:4.7px;color:#5fb8e0;letter-spacing:-0.109px;">Granularité</div>
<div class="t" style="left:789.70px;top:19.38px;font-size:6.4px;color:#333;letter-spacing:-0.049px;">Par jour</div>
<div class="t" style="left:736.80px;top:14.84px;font-size:6.1px;color:#555;letter-spacing:-0.087px;">Données du</div>
<div class="t" style="left:741.80px;top:22.46px;font-size:5.6px;color:#777;letter-spacing:-0.059px;">02/11/2022</div>
<div class="t" style="left:944.00px;top:19.30px;font-size:5.2px;color:#3d8fd9;letter-spacing:0.223px;">John Doe</div>
<div class="t" style="left:123.00px;top:50.74px;font-size:8.1px;color:#2b2b2b;letter-spacing:0.216px;-webkit-text-stroke:0.22px #2b2b2b;">Taille du marché</div>
<div class="t" style="left:123.00px;top:62.24px;font-size:6.1px;color:#5a5a5a;letter-spacing:0.090px;">Nombre de fois où vos mots-clés sont recherchés</div>
<div class="t" style="left:419.20px;top:50.74px;font-size:8.1px;color:#2b2b2b;letter-spacing:0.204px;-webkit-text-stroke:0.22px #2b2b2b;">Concurrence sur les segments de marché</div>
<div class="t" style="left:419.20px;top:62.24px;font-size:6.1px;color:#5a5a5a;letter-spacing:0.093px;">Comparez les performances de vos concurrents sur les différents segments de marché.</div>
<div class="t" style="left:123.00px;top:258.64px;font-size:8.1px;color:#2b2b2b;letter-spacing:0.211px;-webkit-text-stroke:0.22px #2b2b2b;">Taille des segments de marché</div>
<div class="t" style="left:123.00px;top:270.14px;font-size:6.1px;color:#5a5a5a;letter-spacing:0.088px;">Volume de recherche associé à vos différents segments de marché</div>
<div class="t" style="left:567.30px;top:258.64px;font-size:8.1px;color:#2b2b2b;letter-spacing:0.251px;-webkit-text-stroke:0.22px #2b2b2b;">Ma performance par segment de marché</div>
<div class="t" style="left:567.30px;top:270.14px;font-size:6.1px;color:#5a5a5a;letter-spacing:0.105px;">Efficacité de ma visibilité sur les différents segments de marché</div>
<div class="t" style="left:123.00px;top:466.64px;font-size:8.1px;color:#2b2b2b;letter-spacing:0.241px;-webkit-text-stroke:0.22px #2b2b2b;">Ma visibilité par segment de marché</div>
<div class="t" style="left:123.00px;top:478.14px;font-size:6.1px;color:#5a5a5a;letter-spacing:0.125px;">Evolution de ma visibilité sur les différents segments de marché</div>
<div class="t" style="left:229.00px;top:165.42px;font-size:6.0px;color:#777;letter-spacing:0.318px;">recherches par mois</div>
<div class="t" style="left:694.00px;top:77.16px;font-size:5.6px;color:#fff;font-weight:700;letter-spacing:0.029px;">Filtres</div>
<div class="t" style="left:690.74px;top:101.71px;font-size:4.6px;color:#999;">musculation</div>
<div class="t" style="left:750.45px;top:126.51px;font-size:4.6px;color:#999;">rugby</div>
<div class="t" style="left:761.60px;top:177.21px;font-size:4.6px;color:#999;">tennis</div>
<div class="t" style="left:729.32px;top:217.81px;font-size:4.6px;color:#999;">plongée</div>
<div class="t" style="left:661.99px;top:217.81px;font-size:4.6px;color:#999;">football</div>
<div class="t" style="left:622.03px;top:177.21px;font-size:4.6px;color:#999;">randonnée</div>
<div class="t" style="left:644.77px;top:126.51px;font-size:4.6px;color:#999;">plage</div>
<div class="t" style="left:431.00px;top:159.32px;font-size:4.7px;color:#777;letter-spacing:0.137px;">go-sport.com</div>
<div class="t" style="left:431.00px;top:168.92px;font-size:4.7px;color:#777;letter-spacing:0.099px;">intersport.fr</div>
<div class="t" style="left:237.50px;top:285.11px;font-size:4.6px;color:#777;letter-spacing:0.121px;">football</div>
<div class="t" style="left:267.40px;top:285.11px;font-size:4.6px;color:#777;letter-spacing:0.135px;">musculation</div>
<div class="t" style="left:306.50px;top:285.11px;font-size:4.6px;color:#777;letter-spacing:0.150px;">plage</div>
<div class="t" style="left:332.50px;top:285.11px;font-size:4.6px;color:#777;letter-spacing:0.149px;">plongée</div>
<div class="t" style="left:363.40px;top:285.11px;font-size:4.6px;color:#777;letter-spacing:0.115px;">randonnée</div>
<div class="t" style="left:399.70px;top:285.11px;font-size:4.6px;color:#777;letter-spacing:0.120px;">rugby</div>
<div class="t" style="left:425.50px;top:285.11px;font-size:4.6px;color:#777;letter-spacing:0.122px;">tennis</div>
<div class="t" style="left:237.80px;top:326.84px;font-size:6.1px;color:#8430a8;letter-spacing:-0.245px;">tennis: 26,26%</div>
<div class="t" style="left:200.10px;top:332.74px;font-size:6.1px;color:#8430a8;letter-spacing:-0.213px;">(875 390 recherches par mois)</div>
<div class="t" style="left:228.90px;top:393.14px;font-size:6.1px;color:#7540c0;letter-spacing:-0.193px;">rugby: 7,77%</div>
<div class="t" style="left:188.00px;top:398.64px;font-size:6.1px;color:#7540c0;letter-spacing:-0.248px;">(259 030 recherches par mois)</div>
<div class="t" style="left:226.00px;top:413.74px;font-size:6.1px;color:#6559cc;letter-spacing:-0.226px;">randonnée: 6,08%</div>
<div class="t" style="left:197.60px;top:418.74px;font-size:6.1px;color:#6559cc;letter-spacing:-0.220px;">(202 850 recherches par mois)</div>
<div class="t" style="left:242.80px;top:424.94px;font-size:6.1px;color:#5e7bd8;letter-spacing:-0.211px;">plongée: 0,24%</div>
<div class="t" style="left:214.40px;top:430.44px;font-size:6.1px;color:#5e7bd8;letter-spacing:-0.249px;">(7 840 recherches par mois)</div>
<div class="t" style="left:398.40px;top:340.94px;font-size:6.1px;color:#4dd2fc;letter-spacing:-0.207px;">football: 34,48%</div>
<div class="t" style="left:400.00px;top:346.84px;font-size:6.1px;color:#4dd2fc;letter-spacing:-0.251px;">(1 149 770 recherches par mois)</div>
<div class="t" style="left:398.10px;top:403.64px;font-size:6.1px;color:#52b5ee;letter-spacing:-0.205px;">musculation: 5,05%</div>
<div class="t" style="left:399.50px;top:409.34px;font-size:6.1px;color:#52b5ee;letter-spacing:-0.224px;">(168 280 recherches par mois)</div>
<div class="t" style="left:382.30px;top:424.44px;font-size:6.1px;color:#5a9be3;letter-spacing:-0.221px;">plage: 20,12%</div>
<div class="t" style="left:383.80px;top:430.14px;font-size:6.1px;color:#5a9be3;letter-spacing:-0.237px;">(670 980 recherches par mois)</div>
<div class="t" style="left:546.00px;top:493.16px;font-size:5.6px;color:#fff;font-weight:700;letter-spacing:0.029px;">Filtres</div>
<div class="t" style="left:132.90px;top:509.96px;font-size:5.6px;color:#2ba3d4;letter-spacing:0.130px;">Type de résultat</div>
<div class="t" style="left:136.20px;top:522.11px;font-size:6.6px;color:#555;letter-spacing:0.016px;">Tous</div>
<div class="t" style="left:123.00px;top:551.77px;font-size:5.0px;color:#555;font-weight:700;letter-spacing:-0.048px;">Visibilité</div>
<div class="t" style="left:459.70px;top:551.81px;font-size:4.6px;color:#777;letter-spacing:0.121px;">football</div>
<div class="t" style="left:489.60px;top:551.81px;font-size:4.6px;color:#777;letter-spacing:0.135px;">musculation</div>
<div class="t" style="left:528.70px;top:551.81px;font-size:4.6px;color:#777;letter-spacing:0.150px;">plage</div>
<div class="t" style="left:554.70px;top:551.81px;font-size:4.6px;color:#777;letter-spacing:0.149px;">plongée</div>
<div class="t" style="left:585.60px;top:551.81px;font-size:4.6px;color:#777;letter-spacing:0.115px;">randonnée</div>
<div class="t" style="left:621.90px;top:551.81px;font-size:4.6px;color:#777;letter-spacing:0.120px;">rugby</div>
<div class="t" style="left:647.70px;top:551.81px;font-size:4.6px;color:#777;letter-spacing:0.122px;">tennis</div>
<div class="t" style="left:136.99px;top:692.22px;font-size:4.7px;color:#666;">0</div>
<div class="t" style="left:125.26px;top:671.15px;font-size:4.7px;color:#666;">20,000</div>
<div class="t" style="left:125.26px;top:650.09px;font-size:4.7px;color:#666;">40,000</div>
<div class="t" style="left:125.26px;top:629.02px;font-size:4.7px;color:#666;">60,000</div>
<div class="t" style="left:125.26px;top:607.95px;font-size:4.7px;color:#666;">80,000</div>
<div class="t" style="left:122.65px;top:586.89px;font-size:4.7px;color:#666;">100,000</div>
<div class="t" style="left:122.65px;top:565.82px;font-size:4.7px;color:#666;">120,000</div>
<div class="t" style="left:131.00px;top:704.12px;font-size:4.7px;color:#707070;letter-spacing:0.053px;">27/10/2022</div>
<div class="t" style="left:269.67px;top:704.12px;font-size:4.7px;color:#707070;letter-spacing:0.053px;">28/10/2022</div>
<div class="t" style="left:408.33px;top:704.12px;font-size:4.7px;color:#707070;letter-spacing:0.053px;">29/10/2022</div>
<div class="t" style="left:547.00px;top:704.12px;font-size:4.7px;color:#707070;letter-spacing:0.053px;">30/10/2022</div>
<div class="t" style="left:685.67px;top:704.12px;font-size:4.7px;color:#707070;letter-spacing:0.053px;">31/10/2022</div>
<div class="t" style="left:824.33px;top:704.12px;font-size:4.7px;color:#707070;letter-spacing:0.087px;">01/11/2022</div>
<div class="t" style="left:963.00px;top:704.12px;font-size:4.7px;color:#707070;letter-spacing:0.087px;">02/11/2022</div>
</div>
</body></html>
